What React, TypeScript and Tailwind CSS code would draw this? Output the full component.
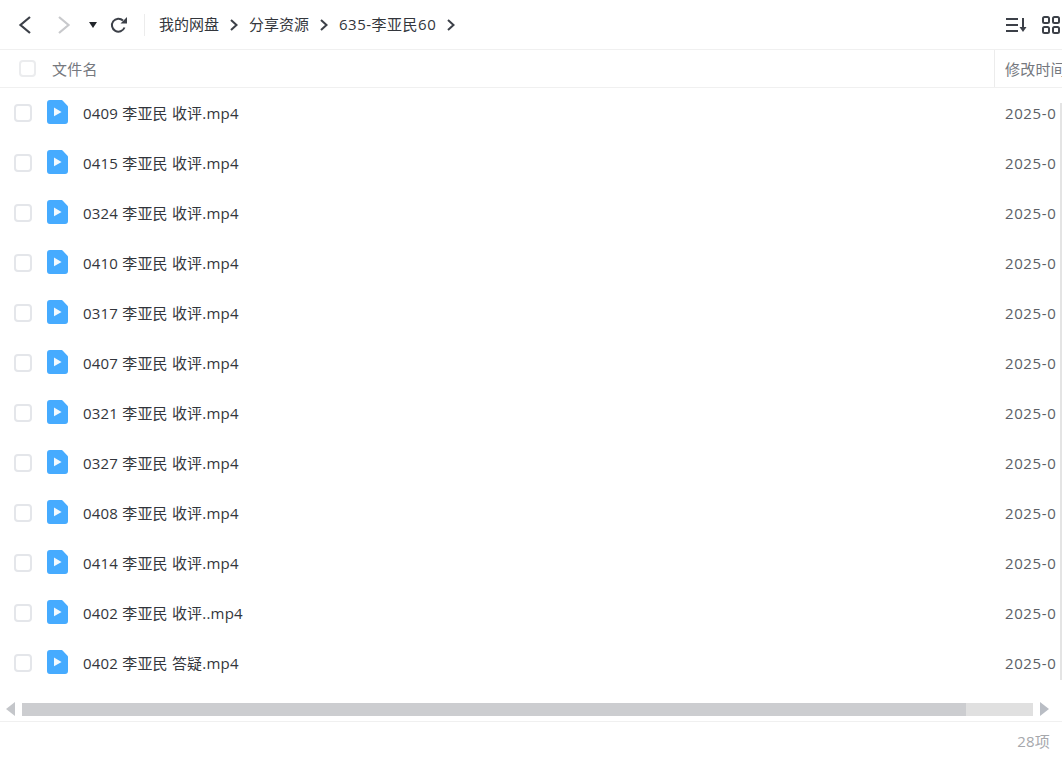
import React from "react";

const rows = [
  "0409 李亚民 收评.mp4",
  "0415 李亚民 收评.mp4",
  "0324 李亚民 收评.mp4",
  "0410 李亚民 收评.mp4",
  "0317 李亚民 收评.mp4",
  "0407 李亚民 收评.mp4",
  "0321 李亚民 收评.mp4",
  "0327 李亚民 收评.mp4",
  "0408 李亚民 收评.mp4",
  "0414 李亚民 收评.mp4",
  "0402 李亚民 收评..mp4",
  "0402 李亚民 答疑.mp4",
];

function Crumb() {
  return (
    <svg width="10" height="14" viewBox="0 0 10 14" fill="none" className="mx-[10px] shrink-0">
      <path d="M2 2l5.5 5L2 12" stroke="#3c4048" strokeWidth="2" />
    </svg>
  );
}

function FileIcon() {
  return (
    <svg width="21" height="24" viewBox="0 0 21 24" className="shrink-0">
      <path d="M3 0h11.5a1.5 1.5 0 0 1 1.1.4l4.9 5.4a1.5 1.5 0 0 1 .5 1.1V21a3 3 0 0 1-3 3H3a3 3 0 0 1-3-3V3a3 3 0 0 1 3-3z" fill="#46abff" />
      <path d="M7 7.5v8.8l7.6-4.4z" fill="#f4faff" />
    </svg>
  );
}

export default function App() {
  return (
    <div className="w-[1062px] h-[760px] overflow-hidden bg-white flex flex-col text-[15px] tracking-[0.2px] font-['Open_Sans','Noto_Sans_CJK_SC',sans-serif]">
      <div className="h-[50px] shrink-0 flex items-center border-b border-[#f0f0f0]">
        <svg width="16" height="20" viewBox="0 0 16 20" fill="none" className="ml-[17px] shrink-0">
          <path d="M13 2L3.5 10l9.5 8" stroke="#3c4048" strokeWidth="2.2" />
        </svg>
        <svg width="16" height="20" viewBox="0 0 16 20" fill="none" className="ml-[23px] shrink-0">
          <path d="M3 2l9.5 8L3 18" stroke="#c8c9cc" strokeWidth="2.2" />
        </svg>
        <svg width="8" height="6" viewBox="0 0 8 6" className="ml-[17px] shrink-0">
          <path d="M0 0h8L4 6z" fill="#22252b" />
        </svg>
        <svg width="18" height="18" viewBox="0 0 18 18" fill="none" className="ml-[13px] shrink-0">
          <path d="M14.5 11.5A6.5 6.5 0 1 1 13 4.5" stroke="#3c4048" strokeWidth="2" />
          <path d="M10.5 7.5H17V1z" fill="#3c4048" />
        </svg>
        <div className="ml-[16px] w-px h-[22px] bg-[#ececec] shrink-0" />
        <div className="ml-[14px] flex items-center text-[#33363c] tracking-normal">
          <span>我的网盘</span>
          <Crumb />
          <span>分享资源</span>
          <Crumb />
          <span className="tracking-[0.5px]">635-李亚民60</span>
          <Crumb />
        </div>
        <div className="ml-auto flex items-center">
          <svg width="22" height="16" viewBox="0 0 22 16" fill="none">
            <path d="M0 2h12M0 8h12M0 14h12" stroke="#3c4048" strokeWidth="2" />
            <path d="M17 1v12" stroke="#3c4048" strokeWidth="2" />
            <path d="M13.5 10h7L17 15z" fill="#3c4048" />
          </svg>
          <svg width="18" height="18" viewBox="0 0 18 18" fill="none" className="ml-[14px] mr-[2px]">
            <rect x="1" y="1" width="6" height="6" rx="1.5" stroke="#3c4048" strokeWidth="2" />
            <rect x="11" y="1" width="6" height="6" rx="1.5" stroke="#3c4048" strokeWidth="2" />
            <rect x="1" y="11" width="6" height="6" rx="1.5" stroke="#3c4048" strokeWidth="2" />
            <rect x="11" y="11" width="6" height="6" rx="1.5" stroke="#3c4048" strokeWidth="2" />
          </svg>
        </div>
      </div>

      <div className="h-[38px] shrink-0 flex items-center border-b border-[#f0f0f0] text-[#75787e]">
        <div className="ml-[19px] w-[17px] h-[17px] rounded-[4px] border-2 border-[#ebecee] shrink-0" />
        <span className="ml-[16px] pt-[1px]">文件名</span>
        <div className="ml-auto w-[68px] h-full border-l border-[#ececec] pl-[10px] pt-[1px] flex items-center whitespace-nowrap overflow-hidden">修改时间</div>
      </div>

      <div className="relative h-[600px] shrink-0 flex flex-col">
        {rows.map((name, i) => (
          <div key={i} className="h-[50px] shrink-0 flex items-center text-[#33363c]">
            <div className="ml-[14px] w-[18px] h-[18px] rounded-[4px] border-2 border-[#e4e6ea] shrink-0" />
            <div className="ml-[15px] -mt-[2px]"><FileIcon /></div>
            <span className="ml-[15px]">{name}</span>
            <span className="ml-auto w-[57px] text-[#5c5f66] tracking-[0.6px] whitespace-nowrap overflow-hidden">2025-0</span>
          </div>
        ))}
        <div className="absolute right-0 top-[15px] w-[2px] h-[577px] bg-[#e4e4e4]" />
      </div>

      <div className="mt-[13px] h-[16px] shrink-0 flex items-center">
        <svg width="10" height="14" viewBox="0 0 10 14" className="ml-[6px] shrink-0"><path d="M9 0v14L0 7z" fill="#c4c6ca" /></svg>
        <div className="ml-[6px] w-[1011px] h-[13px] bg-[#e0e0e0] shrink-0">
          <div className="w-[944px] h-full bg-[#cccdd0]" />
        </div>
        <svg width="10" height="14" viewBox="0 0 10 14" className="ml-[7px] shrink-0"><path d="M0 0v14l9-7z" fill="#b9bdc4" /></svg>
      </div>

      <div className="mt-[4px] flex-1 border-t border-[#f0f0f0] flex items-center justify-end pr-[12px] text-[#a6a8ac]">28项</div>
    </div>
  );
}
